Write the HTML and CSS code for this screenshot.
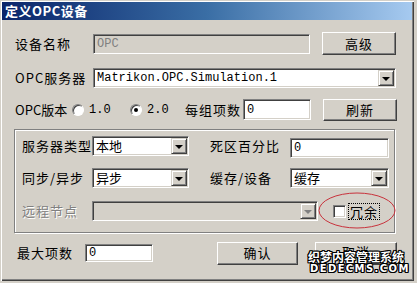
FILE: index.html
```html
<!DOCTYPE html>
<html>
<head>
<meta charset="utf-8">
<link rel="stylesheet" href="styles.css">
</head>
<body>
<div class="window">
  <div class="titlebar"><span class="title">定义OPC设备</span></div>

  <div class="row r1">
    <span class="lbl w78">设备名称</span>
    <div class="field disabled w217"><span class="mono gray">OPC</span></div>
    <div class="btn w74 ml12">高级</div>
  </div>

  <div class="row r2">
    <span class="lbl w78">OPC服务器</span>
    <div class="field combo w303"><span class="mono">Matrikon.OPC.Simulation.1</span><span class="arrow"><i class="tri"></i></span></div>
  </div>

  <div class="row r3">
    <span class="lbl tight w57">OPC版本</span>
    <span class="radio"></span><span class="mono num n1">1.0</span>
    <span class="radio on"></span><span class="mono num n2">2.0</span>
    <span class="lbl w58">每组项数</span>
    <div class="field w68 h21"><span class="mono">0</span></div>
    <div class="btn w74 h22 ml12">刷新</div>
  </div>

  <div class="group">
    <div class="grow ga">
      <span class="lbl w70">服务器类型</span>
      <div class="field combo w97"><span>本地</span><span class="arrow"><i class="tri"></i></span></div>
      <span class="lbl w80 ml21">死区百分比</span>
      <div class="field w99 down2"><span class="mono">0</span></div>
    </div>
    <div class="grow gb">
      <span class="lbl w70">同步/异步</span>
      <div class="field combo w97"><span>异步</span><span class="arrow"><i class="tri"></i></span></div>
      <span class="lbl w80 ml21">缓存/设备</span>
      <div class="field combo w99"><span>缓存</span><span class="arrow"><i class="tri"></i></span></div>
    </div>
    <div class="grow gc">
      <span class="lbl w70 dis">远程节点</span>
      <div class="field combo disabled w226"><span></span><span class="arrow"><i class="tri grey"></i></span></div>
      <span class="check"></span>
      <span class="focus">冗余</span>
    </div>
  </div>

  <div class="row r4">
    <span class="lbl w68 ml2">最大项数</span>
    <div class="field w68 h18"><span class="mono">0</span></div>
    <div class="btn w81 ml64">确认</div>
    <div class="btn w82 ml17 cancel">取消</div>
  </div>

  <svg class="ellipse" width="78" height="37" viewBox="0 0 78 37"><ellipse cx="39" cy="18.5" rx="38" ry="17.5" fill="none" stroke="#c8323c" stroke-width="1"/></svg>

  <div class="watermark">
    <div class="wm1">织梦内容管理系统</div>
    <div class="wm2">DEDECMS.COM</div>
  </div>
</div>
</body>
</html>
```

FILE: styles.css
```css
html, body {
  margin: 0;
  padding: 0;
  background: #d4d0c8;
}
body {
  width: 417px;
  height: 283px;
  overflow: hidden;
  font-family: "Noto Sans CJK SC", sans-serif;
  font-size: 13px;
  color: #000;
}
.window {
  position: relative;
  width: 414px;
  height: 281px;
  background: #d4d0c8;
  box-shadow: inset 1px 1px 0 #d4d0c8, inset 2px 2px 0 #ffffff, inset -1px -1px 0 #404040, inset -2px -2px 0 #808080;
  overflow: hidden;
}
.titlebar {
  margin: 2px 2px 0 2px;
  height: 18px;
  background: linear-gradient(to right, #0a246a 0%, #3a6ea5 50%, #a6caf0 100%);
  display: flex;
  align-items: center;
}
.title {
  color: #fff;
  font-weight: bold;
  font-size: 13px;
  line-height: 18px;
  padding-left: 3px;
  letter-spacing: 0.5px;
}
.row {
  display: flex;
  align-items: center;
  padding-left: 15px;
}
.r1 { margin-top: 12px; height: 23px; }
.r2 { margin-top: 13px; height: 20px; }
.r3 { margin-top: 10px; height: 23px; }
.r4 { margin-top: 8px; height: 24px; }

.lbl {
  display: inline-block;
  white-space: nowrap;
  line-height: 16px;
  letter-spacing: 1px;
  flex: none;
}
.lbl.tight { letter-spacing: 0; }
.dis {
  color: #808080;
  text-shadow: 1px 1px 0 #fff;
}
.mono {
  font-family: "Liberation Mono", monospace;
  font-size: 12px;
}
.gray { color: #808080; }
.num { margin-left: 5px; flex: none; }
.n1 { width: 41px; }
.n2 { width: 38px; }

.w57 { width: 57px; }
.w58 { width: 58px; }
.w68 { width: 68px; }
.w70 { width: 70px; }
.w74 { width: 74px; }
.w78 { width: 78px; }
.w80 { width: 80px; }
.w81 { width: 81px; }
.w82 { width: 82px; }
.w97 { width: 97px; }
.w99 { width: 99px; }
.w217 { width: 217px; }
.w226 { width: 226px; }
.w303 { width: 303px; }
.ml2 { margin-left: 2px; }
.ml12 { margin-left: 12px; }
.ml17 { margin-left: 17px; }
.ml21 { margin-left: 21px; }
.ml64 { margin-left: 64px; }
.h18 { height: 18px !important; }
.h21 { height: 21px !important; }
.h22 { height: 22px !important; }
.down2 { position: relative; top: 2px; }

.field {
  box-sizing: border-box;
  height: 20px;
  background: #fff;
  border: 1px solid;
  border-color: #808080 #ffffff #ffffff #808080;
  box-shadow: inset 1px 1px 0 #404040, inset -1px -1px 0 #d4d0c8;
  display: flex;
  align-items: center;
  padding-left: 3px;
  line-height: 16px;
  flex: none;
  overflow: hidden;
  white-space: nowrap;
}
.field.disabled { background: #d4d0c8; }
.combo {
  justify-content: space-between;
  padding-right: 1px;
  padding-left: 3px;
}
.arrow {
  box-sizing: border-box;
  width: 16px;
  height: 16px;
  flex: none;
  background: #d4d0c8;
  border: 1px solid;
  border-color: #d4d0c8 #404040 #404040 #d4d0c8;
  box-shadow: inset 1px 1px 0 #fff, inset -1px -1px 0 #808080;
  display: flex;
  align-items: center;
  justify-content: center;
}
.tri {
  display: block;
  width: 0;
  height: 0;
  border-left: 4px solid transparent;
  border-right: 4px solid transparent;
  border-top: 4px solid #000;
  margin-top: 1px;
}
.tri.grey { border-top-color: #808080; }

.btn {
  box-sizing: border-box;
  height: 23px;
  flex: none;
  background: #d4d0c8;
  border: 1px solid;
  border-color: #ffffff #404040 #404040 #ffffff;
  box-shadow: inset -1px -1px 0 #808080, inset 1px 1px 0 #d4d0c8;
  display: flex;
  align-items: center;
  justify-content: center;
  letter-spacing: 1px;
  line-height: 16px;
}
.cancel { align-items: flex-start; padding-top: 1px; }

.radio {
  box-sizing: border-box;
  width: 12px;
  height: 12px;
  border-radius: 50%;
  background: #fff;
  border: 1px solid;
  border-color: #808080 #ffffff #ffffff #808080;
  box-shadow: inset 1px 1px 0 #404040;
  flex: none;
  position: relative;
}
.radio.on::after {
  content: "";
  position: absolute;
  left: 3px;
  top: 3px;
  width: 4px;
  height: 4px;
  border-radius: 50%;
  background: #000;
}

.group {
  box-sizing: border-box;
  margin: 8px 0 0 14px;
  width: 381px;
  height: 104px;
  border: 1px solid #808080;
  box-shadow: inset 1px 1px 0 #fff, 1px 1px 0 #fff;
  padding: 6px 0 0 7px;
}
.grow {
  display: flex;
  align-items: center;
  height: 20px;
}
.gb { margin-top: 12px; }
.gc { margin-top: 13px; }

.check {
  box-sizing: border-box;
  width: 13px;
  height: 13px;
  margin-left: 15px;
  background: #fff;
  border: 1px solid;
  border-color: #808080 #ffffff #ffffff #808080;
  box-shadow: inset 1px 1px 0 #404040, inset -1px -1px 0 #d4d0c8;
  flex: none;
}
.focus {
  margin-left: 3px;
  outline: 1px dotted #000;
  line-height: 15px;
  padding: 0 1px;
  letter-spacing: 1px;
}

.ellipse {
  position: absolute;
  left: 318px;
  top: 192px;
}
.watermark {
  position: absolute;
  left: 308px;
  top: 250px;
  width: 100px;
  color: #fff;
  font-weight: bold;
  text-shadow: 1px 0 0 #000, -1px 0 0 #000, 0 1px 0 #000, 0 -1px 0 #000, 1px 1px 0 #000, -1px -1px 0 #000, 1px -1px 0 #000, -1px 1px 0 #000;
}
.wm1 {
  font-size: 12px;
  line-height: 13px;
  white-space: nowrap;
}
.wm2 {
  font-family: "DejaVu Sans", sans-serif;
  font-size: 10px;
  line-height: 11px;
  letter-spacing: 1.4px;
  margin-left: 2px;
  white-space: nowrap;
}
```
